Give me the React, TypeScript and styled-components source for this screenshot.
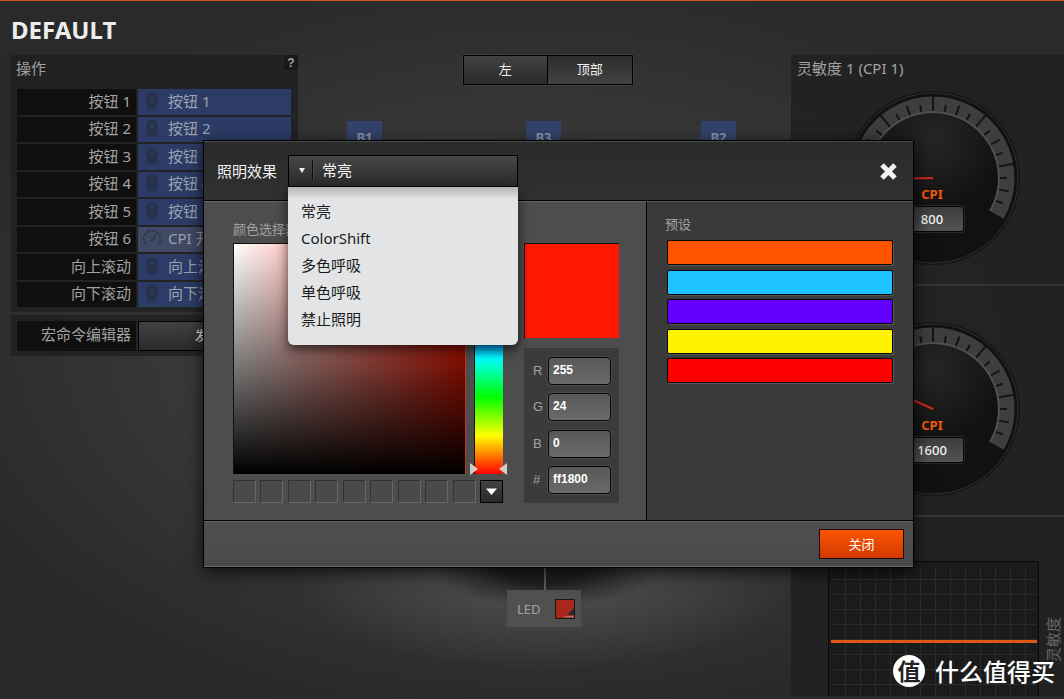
import React, { useState } from 'react';
import styled, { createGlobalStyle } from 'styled-components';

const ui = `"Noto Sans", "Noto Sans CJK SC", sans-serif`;
const arial = `"Liberation Sans", "Noto Sans CJK SC", sans-serif`;

const GlobalStyle = createGlobalStyle`
  *, *::before, *::after { box-sizing: border-box; }
  html, body { margin: 0; background: #2a2a2b; }
  body { overflow: hidden; }
  button, input, select { font: inherit; color: inherit; margin: 0; }
  ul { list-style: none; margin: 0; padding: 0; }
`;

const Page = styled.div`
  position: relative;
  display: flex;
  flex-direction: column;
  min-height: 100vh;
  border-top: 1px solid #d0561c;
  background:
    radial-gradient(ellipse 110px 36px at 545px 570px, rgba(28, 28, 28, 0.95) 35%, transparent),
    radial-gradient(ellipse 250px 90px at 545px 580px, rgba(80, 80, 80, 0.8) 20%, transparent),
    radial-gradient(ellipse 620px 380px at 532px 350px, #3a3a3a 50%, transparent),
    linear-gradient(#2a2a2b, #28282a);
  font: 15px/20px ${ui};
  color: #a3a3a3;
`;

const Header = styled.header`
  padding: 12px 11px 0;
`;

const ProfileName = styled.h1`
  margin: 0;
  font-size: 24px;
  line-height: 34px;
  font-weight: 700;
  color: #ededed;
`;

const Workspace = styled.main`
  flex: 1;
  display: grid;
  grid-template-columns: 287px 1fr 273px;
  align-items: start;
  padding: 8px 0 0 11px;
`;

const Panel = styled.section`
  background: rgba(32, 32, 33, 0.82);
`;

const PanelTop = styled.div`
  display: flex;
  justify-content: space-between;
  padding-left: 5px;
  height: 34px;
`;

const PanelTitle = styled.h2`
  margin: 0;
  padding-top: 3px;
  font-size: 15px;
  line-height: 20px;
  font-weight: 400;
`;

const HelpButton = styled.button`
  width: 14px;
  height: 15px;
  padding: 0;
  border: 0;
  background: #181818;
  font: 700 12px/17px ${arial};
`;

const Rows = styled.div`
  display: grid;
  grid-template-rows: repeat(8, 1fr);
  gap: 2px;
  height: 218px;
  padding: 0 7px 0 6px;
`;

const Row = styled.div`
  display: grid;
  grid-template-columns: 119px 1fr;
  gap: 2px;
`;

const RowLabel = styled.label`
  display: flex;
  align-items: center;
  justify-content: flex-end;
  padding: 0 5px 2px 0;
  background: #0f0f0f;
`;

const ActionButton = styled.button<{ $cpi?: boolean }>`
  display: flex;
  align-items: center;
  gap: 4px;
  padding: 0 2px 2px;
  border: 0;
  background: ${(p) => (p.$cpi ? '#414a64' : '#2c3c66')};
  text-align: left;
  color: #9ba2b1;
`;

const IconSlot = styled.span`
  display: flex;
  justify-content: center;
  width: 24px;
`;

const MacroRow = styled(Row)`
  margin-top: 5px;
  padding: 6px 7px 5px 6px;
  border-top: 3px solid #303031;
  height: 44px;
`;

const MacroLabel = styled(RowLabel)`
  padding-bottom: 5px;
`;

const DarkButton = styled.button<{ $pressed?: boolean }>`
  padding: 0 0 2px;
  border: 1px solid #000;
  background: ${(p) => (p.$pressed ? 'linear-gradient(#2d2d2d, #424242)' : 'linear-gradient(#424242, #2a2a2a)')};
  color: #f0f0f0;
  font: 13px/20px ${ui};
`;

const Stage = styled.section`
  position: relative;
  display: flex;
  justify-content: center;
  height: 640px;
`;

const ViewSwitch = styled.div`
  display: flex;
  width: 170px;
  height: 30px;
  margin-left: 6px;
  box-shadow: 0 0 2px #555;

  button { flex: 1; }
  button + button { border-left: 0; }
`;

const Connectors = styled.svg`
  position: absolute;
  inset: 0;
  width: 100%;
  height: 100%;
`;

const Pin = styled.span<{ $x: number }>`
  position: absolute;
  left: ${(p) => p.$x}px;
  top: 66px;
  width: 35px;
  height: 33px;
  background: #33436c;
  color: #8b94a8;
  text-align: center;
  font: 700 13px/32px ${ui};
`;

const LedNode = styled.div`
  position: absolute;
  left: 209px;
  top: 535px;
  display: flex;
  align-items: center;
  justify-content: space-between;
  width: 74px;
  height: 37px;
  padding: 0 6px 0 10px;
  background: #505050;
  font-size: 13px;
`;

const LedSwatch = styled.button`
  width: 20px;
  height: 20px;
  padding: 0;
  border: 1px solid #161616;
  background: #a8281c;
  line-height: 0;
`;

const Settings = styled(Panel)`
  height: 641px;
`;

const GaugeSection = styled.section`
  position: relative;
  height: 231px;
  border-bottom: 2px solid #363637;
  padding-left: 6px;
`;

const GaugeFace = styled.div`
  position: absolute;
  left: 52px;
  top: 33px;
  width: 180px;
  height: 180px;
`;

const GaugeReadout = styled.label`
  position: absolute;
  left: 57px;
  top: 97px;
  width: 64px;
  color: #f4590b;
  text-align: center;
  font: 700 13px/18px ${ui};
`;

const ReadoutInput = styled.input`
  display: block;
  width: 64px;
  height: 26px;
  margin-top: 3px;
  padding: 0;
  border: 1px solid #050505;
  border-radius: 3px;
  background: linear-gradient(#3c3c3c, #545454);
  box-shadow: 0 0 1px 1px #2c2c2c;
  color: #f4f4f4;
  text-align: center;
  font: 500 13px/20px ${ui};
`;

const GraphSection = styled.section`
  display: flex;
  align-items: center;
  gap: 4px;
  padding: 44px 0 0 37px;
`;

const Graph = styled.div`
  flex: 0 0 211px;
  height: 135px;
  padding: 4px 0 0 2px;
  border: 1px solid #080808;
  border-bottom: 0;
  border-radius: 3px 3px 0 0;
  background: #1b1b1c;
  line-height: 0;
`;

const AxisLabel = styled.span`
  padding-bottom: 22px;
  writing-mode: vertical-rl;
  text-orientation: sideways;
  transform: rotate(180deg);
  color: #666;
`;

const Overlay = styled.div`
  position: absolute;
  inset: 0;
  padding: 139px 150px 0 203px;
`;

const Dialog = styled.div`
  display: flex;
  flex-direction: column;
  border: 1px solid #000;
  background: #4d4d4d;
  box-shadow: 0 4px 16px rgba(0, 0, 0, 0.75);
`;

const DialogHeader = styled.div`
  display: flex;
  align-items: center;
  height: 60px;
  padding: 0 14px 0 13px;
  border-top: 1px solid #4b4b4b;
  border-bottom: 1px solid #000;
  background: linear-gradient(#2b2b2b, #303030);
  color: #f2f2f2;
`;

const EffectLabel = styled.label`
  width: 71px;
`;

const EffectField = styled.div`
  position: relative;
  width: 230px;
  height: 32px;
`;

const EffectSelect = styled.select`
  appearance: none;
  width: 100%;
  height: 100%;
  padding: 0 0 2px 33px;
  border: 1px solid #000;
  border-radius: 0;
  background: linear-gradient(#474747, #2a2a2a);
  color: #fafafa;
  outline: 0;
`;

const SelectMark = styled.svg`
  position: absolute;
  left: 10px;
  top: 5px;
  pointer-events: none;
`;

const EffectMenu = styled.ul`
  position: absolute;
  z-index: 2;
  top: 100%;
  left: 0;
  width: 100%;
  && { padding: 10px 0 13px; }
  border-radius: 0 0 6px 6px;
  background: linear-gradient(#b4b4b4, #e2e4e6 12px);
  box-shadow: 0 5px 12px rgba(0, 0, 0, 0.65);
`;

const EffectOption = styled.button`
  display: block;
  width: 100%;
  height: 27px;
  padding: 0 13px;
  border: 0;
  background: none;
  color: #1b1b1b;
  text-align: left;
`;

const CloseIcon = styled.button`
  margin-left: auto;
  width: 20px;
  height: 20px;
  padding: 0;
  border: 0;
  background: none;
  line-height: 0;
`;

const DialogBody = styled.div`
  display: grid;
  grid-template-columns: 1fr 267px;
  height: 319px;
`;

const PickerPane = styled.div`
  padding: 17px 0 0 29px;
  border-top: 1px solid #686868;
  font: 13px/20px ${ui};
`;

const PaneTitle = styled.h3`
  margin: 0 0 4px;
  font-size: 13px;
  line-height: 20px;
  font-weight: 400;
`;

const PickerLayout = styled.div`
  display: grid;
  grid-template-columns: 270px 95px;
  column-gap: 21px;
`;

const PickerMain = styled.div`
  display: flex;
  flex-direction: column;
  gap: 6px;
`;

const Fields = styled.div`
  display: flex;
  justify-content: space-between;
  height: 231px;
`;

const ColorField = styled.div`
  width: 233px;
  border: 1px solid #111;
  border-width: 1px 1px 0 1px;
  border-right-color: #b83a26;
  background:
    linear-gradient(transparent, #000),
    linear-gradient(to right, #fff, #ff1800);
`;

const HueField = styled.div`
  position: relative;
  width: 29px;
`;

const HueSlider = styled.input`
  appearance: none;
  display: block;
  writing-mode: vertical-lr;
  direction: rtl;
  width: 100%;
  height: 100%;
  border-left: 1px solid #111;
  background: linear-gradient(#f00, #f0f, #00f, #0ff, #0f0, #ff0, #f00);

  &::-webkit-slider-thumb { appearance: none; width: 1px; height: 1px; opacity: 0; }
`;

const HueMarks = styled.svg`
  position: absolute;
  left: -4px;
  bottom: -1px;
  pointer-events: none;
`;

const Swatches = styled.div`
  display: flex;
  justify-content: space-between;
`;

const Swatch = styled.button`
  width: 23px;
  height: 23px;
  padding: 0;
  border: 1px solid #333;
  border-right-color: #686868;
  border-bottom-color: #686868;
  background: #4a4a4a;
`;

const MoreButton = styled(DarkButton)`
  width: 23px;
  height: 23px;
  padding: 0;
  line-height: 0;
`;

const Readings = styled.div`
  display: flex;
  flex-direction: column;
  gap: 10px;
`;

const Preview = styled.div`
  height: 95px;
  border: 1px solid #111;
  border-width: 1px 0 0 1px;
  background: #ff1800;
`;

const Channels = styled.div`
  display: grid;
  gap: 8px;
  padding: 9px 8px;
  height: 155px;
  background: #3b3b3b;
  font: 13px/20px ${arial};

  label { display: flex; align-items: center; justify-content: space-between; height: 28px; padding-left: 1px; }
`;

const ChannelInput = styled.input`
  width: 63px;
  height: 28px;
  padding: 0 4px 2px;
  border: 1px solid #080808;
  border-radius: 4px;
  background: linear-gradient(#585858, #6a6a6a);
  box-shadow: 0 0 1px 1px #4b4b4b;
  color: #fff;
  font: 700 12px/20px ${arial};
`;

const PresetPane = styled.div`
  padding: 12px 20px 0 18px;
  border-left: 1px solid #000;
  border-top: 1px solid #555;
  background: #3a3a3a;
`;

const PresetTitle = styled(PaneTitle)`
  margin-bottom: 6px;
`;

const Presets = styled.div`
  display: flex;
  flex-direction: column;
  justify-content: space-between;
  height: 143px;
  padding-left: 2px;
`;

const Preset = styled.button<{ $color: string }>`
  height: 25px;
  padding: 0;
  border: 1px solid #080808;
  border-radius: 2px;
  background: ${(p) => p.$color};
  box-shadow: 1px 1px 1px #5a5a5a;
`;

const DialogFooter = styled.div`
  display: flex;
  justify-content: flex-end;
  height: 47px;
  padding: 8px 9px 0;
  border-top: 1px solid #000;
  box-shadow: inset 0 1px #656565, inset 0 -1px #6a6a6a;
  background: linear-gradient(#4f4f4f, #4a4a4a);
`;

const PrimaryButton = styled.button`
  width: 85px;
  height: 30px;
  padding: 0;
  border: 1px solid #200800;
  background: linear-gradient(#fd5404, #d23a00);
  color: #fff;
  font: 13px/20px ${ui};
`;

const Watermark = styled.div`
  position: absolute;
  right: 9px;
  bottom: 10px;
  display: flex;
  align-items: center;
  gap: 10px;
  color: #fff;
  font: 500 24px/36px "Noto Sans CJK SC", sans-serif;
`;

const WatermarkBadge = styled.span`
  width: 32px;
  height: 32px;
  border-radius: 50%;
  background: #fff;
  color: #222;
  text-align: center;
  font: 700 23px/30px "Noto Sans CJK SC", sans-serif;
`;

function MouseIcon() {
  return (
    <svg width="12" height="18" viewBox="0 0 12 18">
      <rect x="0.5" y="0.5" width="11" height="17" rx="4.5" fill="#26324f" />
      <rect x="4.5" y="4" width="3" height="5" rx="1.5" fill="#2e3b5c" />
    </svg>
  );
}

function DialIcon() {
  return (
    <svg width="20" height="18" viewBox="0 0 20 18" fill="none" stroke="#30384d">
      <path d="M3.5 15.5A8.4 8.4 0 1 1 16.500 15.500" strokeWidth="2" strokeDasharray="3 1.500" />
      <path d="M9 12.500L14 6" strokeWidth="2" />
    </svg>
  );
}

const polar = (deg: number, r: number) => {
  const a = (deg * Math.PI) / 180;
  return [90 + r * Math.sin(a), 90 - r * Math.cos(a)];
};

function Dial({ id, needle }: { id: string; needle: number }) {
  const [x1, y1] = polar(-120, 74);
  const [x2, y2] = polar(120, 74);
  const [i1, j1] = polar(-120, 66);
  const [i2, j2] = polar(120, 66);
  const [nx, ny] = polar(needle, 58);
  const ticks = Array.from({ length: 23 }, (_, i) => (i - 11) * 10);
  return (
    <svg width="180" height="180" viewBox="0 0 180 180">
      <defs>
        <radialGradient id={id} cx="0.5" cy="0.2" r="0.55">
          <stop offset="0" stopColor="#262626" />
          <stop offset="1" stopColor="#111111" />
        </radialGradient>
      </defs>
      <circle cx="90" cy="90" r="86" fill="#111111" stroke="#161616" strokeWidth="2" />
      <circle cx="90" cy="90" r="85" fill="none" stroke="#303030" />
      <circle cx="90" cy="90" r="66" fill={`url(#${id})`} />
      <path d={`M${x1} ${y1}A74 74 0 1 1 ${x2} ${y2}`} fill="none" stroke="#3e3e3e" strokeWidth="15" />
      <path d={`M${i1} ${j1}A66 66 0 1 1 ${i2} ${j2}`} fill="none" stroke="#505050" strokeWidth="2" />
      {ticks.map((t) => {
        const outer = t % 40 === 0 ? 82 : t % 20 === 0 ? 77 : 74;
        const [a, b] = polar(t, 67);
        const [c, d] = polar(t, outer);
        return <path key={t} d={`M${a} ${b}L${c} ${d}`} stroke="#141414" strokeWidth="2" />;
      })}
      <path d={`M90 90L${nx} ${ny}`} stroke="#d32a20" strokeWidth="2" />
    </svg>
  );
}

function Gauge({ id, title, value, needle }: { id: string; title?: string; value: string; needle: number }) {
  return (
    <GaugeSection>
      {title && <PanelTitle>{title}</PanelTitle>}
      <GaugeFace>
        <Dial id={id} needle={needle} />
        <GaugeReadout>
          CPI
          <ReadoutInput defaultValue={value} />
        </GaugeReadout>
      </GaugeFace>
    </GaugeSection>
  );
}

function CurveGraph() {
  const lines = Array.from({ length: 14 }, (_, i) => 14 + i * 15);
  return (
    <svg width="206" height="130" viewBox="0 0 206 130">
      {lines.map((x) => (
        <path key={`v${x}`} d={`M${x}.5 0V130`} stroke="#2b2b2b" />
      ))}
      {lines.slice(0, 8).map((y) => (
        <path key={`h${y}`} d={`M0 ${y - 1}.5H206`} stroke="#2b2b2b" />
      ))}
      <path d="M0 75.500H206" stroke="#df5716" strokeWidth="3" />
    </svg>
  );
}

const actions = ['按钮 1', '按钮 2', '按钮 3', '按钮 4', '按钮 5', '按钮 6', '向上滚动', '向下滚动'];
const effects = ['常亮', 'ColorShift', '多色呼吸', '单色呼吸', '禁止照明'];
const presets = ['#ff5300', '#1fc3ff', '#6400ff', '#fff200', '#ff0000'];
const channels = [
  ['R', '255'],
  ['G', '24'],
  ['B', '0'],
  ['#', 'ff1800'],
];

export default function App() {
  const [effect, setEffect] = useState(effects[0]);

  return (
    <Page>
      <GlobalStyle />
      <Header>
        <ProfileName>DEFAULT</ProfileName>
      </Header>

      <Workspace>
        <Panel>
          <PanelTop>
            <PanelTitle>操作</PanelTitle>
            <HelpButton>?</HelpButton>
          </PanelTop>
          <Rows>
            {actions.map((name, i) => (
              <Row key={name}>
                <RowLabel htmlFor={`action-${i}`}>{name}</RowLabel>
                <ActionButton id={`action-${i}`} $cpi={i === 5}>
                  <IconSlot>{i === 5 ? <DialIcon /> : <MouseIcon />}</IconSlot>
                  {i === 5 ? 'CPI 开关' : name}
                </ActionButton>
              </Row>
            ))}
          </Rows>
          <MacroRow>
            <MacroLabel htmlFor="macro">宏命令编辑器</MacroLabel>
            <DarkButton id="macro">发射器</DarkButton>
          </MacroRow>
        </Panel>

        <Stage>
          <Connectors>
            <path d="M84 82.500H198M289 82.500H403" stroke="#3a4350" fill="none" />
            <path d="M247 505V535" stroke="#5a5a5a" strokeWidth="2" />
          </Connectors>
          <ViewSwitch>
            <DarkButton>左</DarkButton>
            <DarkButton $pressed>顶部</DarkButton>
          </ViewSwitch>
          <Pin $x={49}>B1</Pin>
          <Pin $x={228}>B3</Pin>
          <Pin $x={403}>B2</Pin>
          <LedNode>
            LED
            <LedSwatch aria-label="LED">
              <svg width="18" height="18" viewBox="0 0 18 18">
                <path d="M18 8V15H11Z" fill="#222c28" />
                <path d="M9 16H18V17.500H8Z" fill="#b86a66" />
              </svg>
            </LedSwatch>
          </LedNode>
        </Stage>

        <Settings>
          <Gauge id="dial-1" title="灵敏度 1 (CPI 1)" value="800" needle={-91} />
          <Gauge id="dial-2" value="1600" needle={-66} />
          <GraphSection>
            <Graph>
              <CurveGraph />
            </Graph>
            <AxisLabel>灵敏度</AxisLabel>
          </GraphSection>
        </Settings>
      </Workspace>

      <Overlay>
        <Dialog role="dialog" aria-labelledby="effect-label">
          <DialogHeader>
            <EffectLabel id="effect-label" htmlFor="effect">照明效果</EffectLabel>
            <EffectField>
              <EffectSelect id="effect" value={effect} onChange={(e) => setEffect(e.target.value)}>
                {effects.map((name) => (
                  <option key={name}>{name}</option>
                ))}
              </EffectSelect>
              <SelectMark width="16" height="20" viewBox="0 0 16 20">
                <path d="M1 8H7L4 13Z" fill="#f0f0f0" />
                <path d="M14.500 0V20" stroke="#0c0c0c" />
                <path d="M15.500 0V20" stroke="#4a4a4a" />
              </SelectMark>
              <EffectMenu>
                {effects.map((name) => (
                  <li key={name}>
                    <EffectOption onClick={() => setEffect(name)}>{name}</EffectOption>
                  </li>
                ))}
              </EffectMenu>
            </EffectField>
            <CloseIcon aria-label="关闭">
              <svg width="20" height="20" viewBox="0 0 20 20">
                <path d="M3 4L16 17M16 4L3 17" stroke="#f2f2f2" strokeWidth="5" />
              </svg>
            </CloseIcon>
          </DialogHeader>

          <DialogBody>
            <PickerPane>
              <PaneTitle>颜色选择器</PaneTitle>
              <PickerLayout>
                <PickerMain>
                  <Fields>
                    <ColorField />
                    <HueField>
                      <HueSlider type="range" min={0} max={360} defaultValue={6} aria-label="Hue" />
                      <HueMarks width="37" height="12" viewBox="0 0 37 12">
                        <path d="M0 0V12L8 6Z" fill="#cfcfc8" />
                        <path d="M37 0V12L29 6Z" fill="#cfcfc8" />
                      </HueMarks>
                    </HueField>
                  </Fields>
                  <Swatches>
                    {Array.from({ length: 9 }, (_, i) => (
                      <Swatch key={i} aria-label={`Swatch ${i + 1}`} />
                    ))}
                    <MoreButton aria-label="More">
                      <svg width="13" height="8" viewBox="0 0 13 8">
                        <path d="M1 0.500H12L6.500 7Z" fill="#fff" />
                      </svg>
                    </MoreButton>
                  </Swatches>
                </PickerMain>
                <Readings>
                  <Preview />
                  <Channels>
                    {channels.map(([name, value]) => (
                      <label key={name}>
                        {name}
                        <ChannelInput defaultValue={value} />
                      </label>
                    ))}
                  </Channels>
                </Readings>
              </PickerLayout>
            </PickerPane>
            <PresetPane>
              <PresetTitle>预设</PresetTitle>
              <Presets>
                {presets.map((color) => (
                  <Preset key={color} $color={color} aria-label={color} />
                ))}
              </Presets>
            </PresetPane>
          </DialogBody>

          <DialogFooter>
            <PrimaryButton>关闭</PrimaryButton>
          </DialogFooter>
        </Dialog>
      </Overlay>

      <Watermark>
        <WatermarkBadge>值</WatermarkBadge>
        什么值得买
      </Watermark>
    </Page>
  );
}
